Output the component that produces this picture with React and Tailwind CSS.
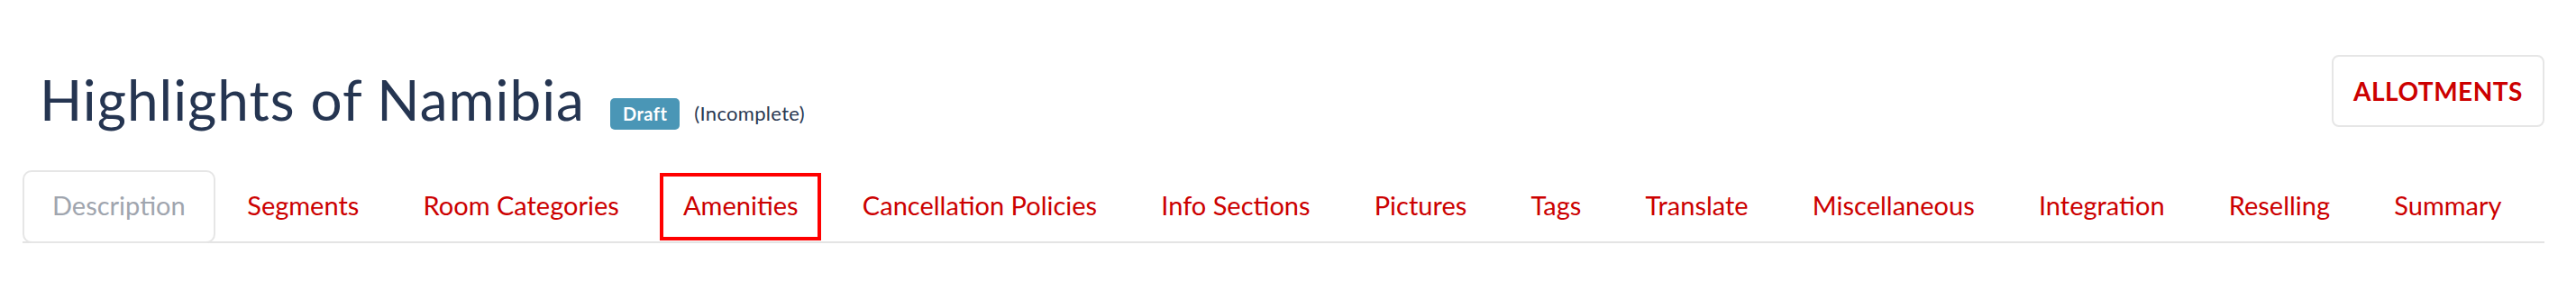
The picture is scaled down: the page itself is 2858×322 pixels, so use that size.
import React from 'react';

const tabs = [
  "Description",
  "Segments",
  "Room Categories",
  "Amenities",
  "Cancellation Policies",
  "Info Sections",
  "Pictures",
  "Tags",
  "Translate",
  "Miscellaneous",
  "Integration",
  "Reselling",
  "Summary",
];

export default function App() {
  return (
    <div className="w-[2858px] h-[322px] bg-white font-['Lato',sans-serif]">
      <div className="pl-[25px] pr-[35px] pt-[61px]">
        {/* Header */}
        <div className="flex justify-between items-start">
          <div className="flex items-baseline pl-[19px] mt-[18px] whitespace-nowrap">
            <h1 className="text-[62px] leading-none tracking-[1px] text-[#253551]">Highlights of Namibia</h1>
            <span className="ml-[28px] inline-block h-[35px] leading-[35px] px-[14px] rounded-[5px] bg-[#4a96b6] text-white text-[20px] font-bold tracking-[0.5px]">
              Draft
            </span>
            <span className="ml-[16px] text-[22px] tracking-[0.3px] text-[#2a3852]">(Incomplete)</span>
          </div>
          <button className="w-[236px] h-[80px] border-2 border-[#e6e6e6] rounded-[8px] text-[28px] font-bold text-[#cc0000] tracking-[0.5px] whitespace-nowrap">
            ALLOTMENTS
          </button>
        </div>

        {/* Tabs */}
        <div className="mt-[45px] flex border-b-2 border-[#e4e4e4]">
          {tabs.map((tab, i) => (
            <div
              key={tab}
              className={
                i === 0
                  ? "relative shrink-0 whitespace-nowrap -mb-[2px] h-[81px] px-[31px] pb-[3px] flex items-center border-2 border-[#e6e6e6] rounded-[10px] bg-white text-[29px] text-[#a0a5ae]"
                  : "relative shrink-0 whitespace-nowrap -mb-[2px] h-[81px] px-[33.6px] pb-[3px] flex items-center border-2 border-transparent text-[29px] text-[#cc0000]"
              }
            >
              {tab}
              {tab === "Amenities" && (
                <span className="absolute left-[8px] right-[8px] top-[1px] bottom-[1px] border-4 border-[#ff0000]" />
              )}
            </div>
          ))}
        </div>
      </div>
    </div>
  );
}
